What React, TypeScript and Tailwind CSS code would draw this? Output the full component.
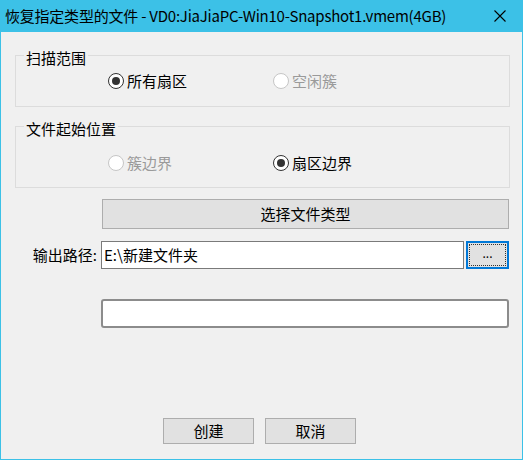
import React from "react";

const FONT = { fontFamily: '"Noto Sans CJK SC", "Noto Sans", sans-serif' };

function Radio({ label, checked, disabled }: { label: string; checked?: boolean; disabled?: boolean }) {
  return (
    <div className="flex items-center gap-[3px] h-[20px]">
      <div
        className={
          "w-[16px] h-[16px] rounded-full bg-white flex items-center justify-center " +
          (disabled ? "border border-[#c6c6c6]" : "border-[1.5px] border-[#333333]")
        }
      >
        {checked && <div className="w-[8px] h-[8px] rounded-full bg-[#333333]" />}
      </div>
      <span className={"text-[15px] leading-[20px] " + (disabled ? "text-[#9a9a9a]" : "text-black")}>{label}</span>
    </div>
  );
}

export default function App() {
  return (
    <div className="w-[523px] h-[460px] flex flex-col" style={FONT}>
      {/* Title bar */}
      <div className="h-[32px] bg-[#3cc1e7] flex items-center pl-[5px] pr-[17px] shrink-0">
        <span className="text-[15px] leading-[20px] tracking-[-0.22px] text-black flex-1 whitespace-nowrap">
          恢复指定类型的文件 - VD0:JiaJiaPC-Win10-Snapshot1.vmem(4GB)
        </span>
        <svg width="12" height="12" viewBox="0 0 12 12" className="shrink-0">
          <path d="M0.5 0.5 L11.5 11.5 M11.5 0.5 L0.5 11.5" stroke="#000" strokeWidth="1.1" />
        </svg>
      </div>

      {/* Body */}
      <div className="flex-1 bg-[#f0f0f0] border-l border-r border-b border-[#3cc1e7] flex flex-col">
        <fieldset className="ml-[14px] mt-[11px] w-[495px] h-[64px] border border-[#dcdcdc]">
          <legend className="ml-[8px] px-[2px] pt-[5px] text-[15px] leading-[20px] text-black">扫描范围</legend>
          <div className="flex pl-[92px] pt-[3px]">
            <div className="w-[165px]">
              <Radio label="所有扇区" checked />
            </div>
            <Radio label="空闲簇" disabled />
          </div>
        </fieldset>

        <fieldset className="ml-[14px] mt-[7px] w-[495px] h-[74px] border border-[#dcdcdc]">
          <legend className="ml-[8px] px-[2px] pt-[5px] text-[15px] leading-[20px] text-black">文件起始位置</legend>
          <div className="flex pl-[92px] pt-[14px]">
            <div className="w-[165px]">
              <Radio label="簇边界" disabled />
            </div>
            <Radio label="扇区边界" checked />
          </div>
        </fieldset>

        <div className="ml-[101px] mt-[11px] w-[407px] h-[30px] bg-[#e1e1e1] border border-[#adadad] flex items-center justify-center text-[15px] text-black">
          选择文件类型
        </div>

        <div className="mt-[12px] flex h-[28px]">
          <div className="w-[100px] pr-[4px] text-right text-[15px] leading-[28px] text-black">输出路径:</div>
          <div className="w-[363px] bg-white border border-[#7a7a7a] flex items-center pl-[2px] text-[15px] text-black">
            E:\新建文件夹
          </div>
          <div className="ml-[2px] w-[43px] h-[28px] border-2 border-[#0078d7] bg-[#e1e1e1] p-[1px]">
            <div className="w-full h-full border border-dotted border-[#333] flex items-end justify-center pb-[6px] text-[12px] leading-none text-black">
              ...
            </div>
          </div>
        </div>

        <div className="ml-[100px] mt-[30px] w-[408px] h-[29px] bg-white border-2 border-[#8c8c8c] rounded-[3px]" />

        <div className="ml-[162px] mt-[90px] flex gap-[11px]">
          <div className="w-[91px] h-[26px] bg-[#e1e1e1] border border-[#adadad] flex items-center justify-center text-[15px] text-black">
            创建
          </div>
          <div className="w-[91px] h-[26px] bg-[#e1e1e1] border border-[#adadad] flex items-center justify-center text-[15px] text-black">
            取消
          </div>
        </div>
      </div>
    </div>
  );
}
